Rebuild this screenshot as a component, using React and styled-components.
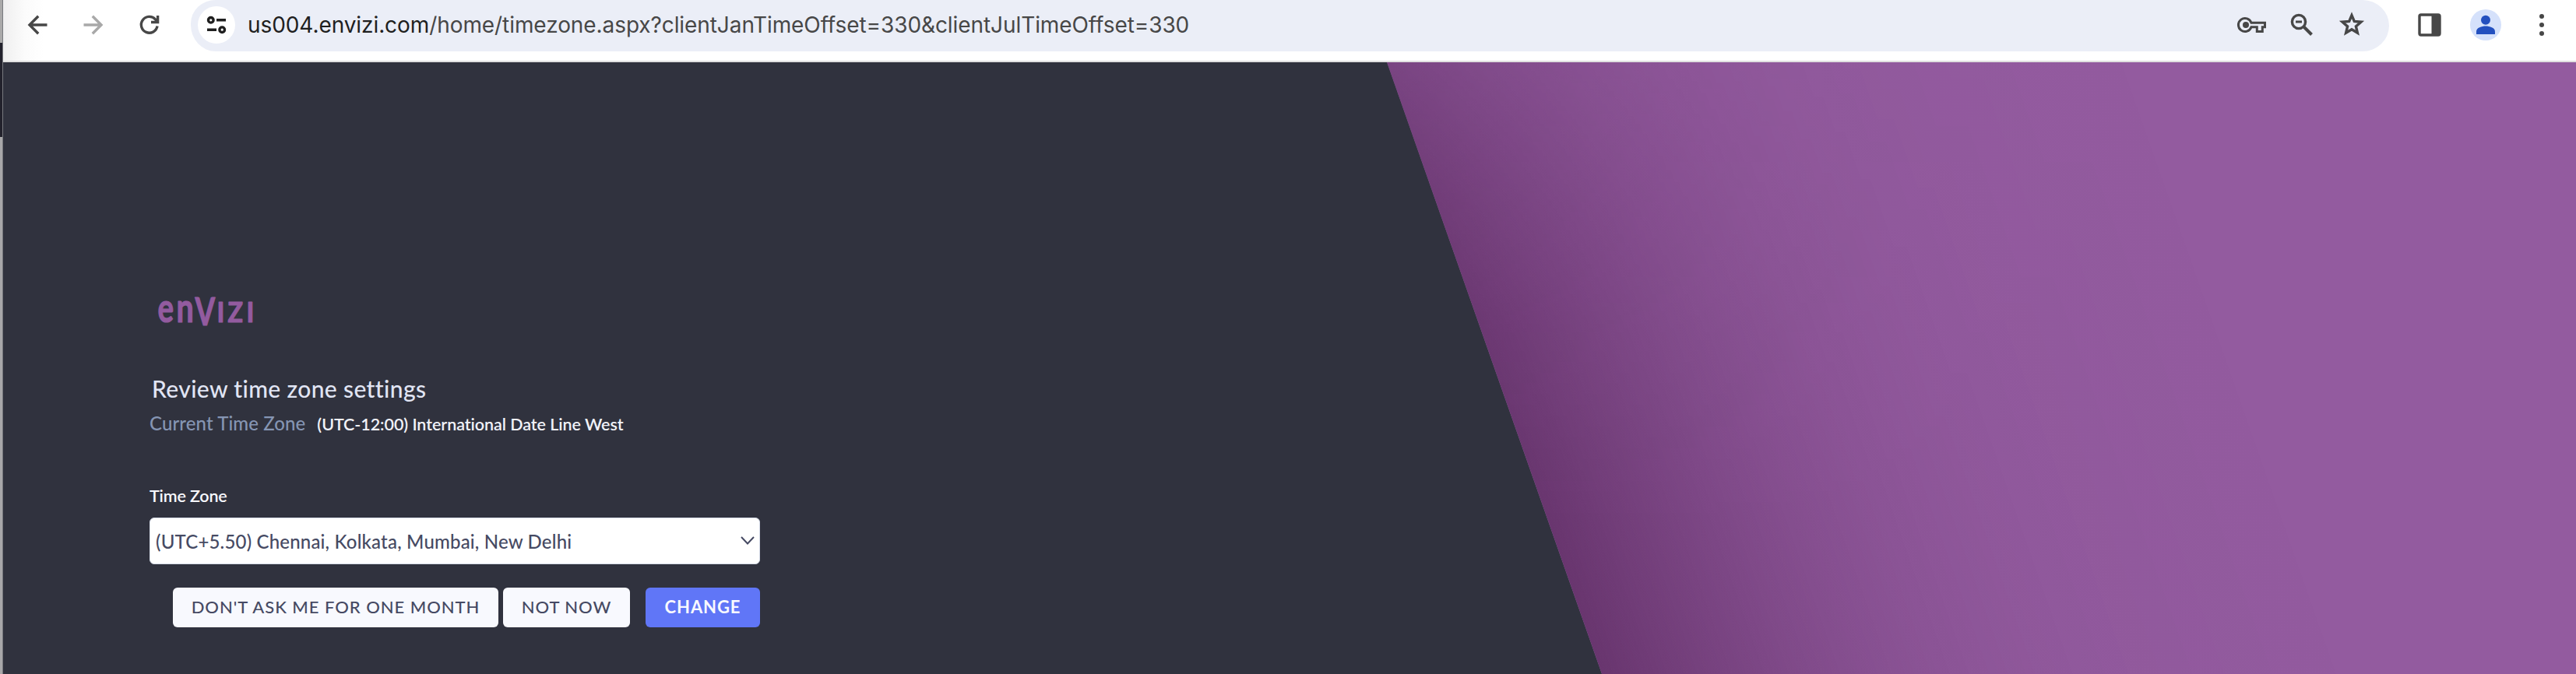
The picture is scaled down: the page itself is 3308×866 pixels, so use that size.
import React from "react";
import styled, { createGlobalStyle } from "styled-components";

const GlobalStyle = createGlobalStyle`
  *, *::before, *::after { box-sizing: border-box; }
  html, body { margin: 0; padding: 0; overflow: hidden; }
`;

const Screen = styled.div`
  display: flex;
  width: 3308px;
  height: 866px;
  overflow: hidden;
  font-family: Lato, "Open Sans", sans-serif;
`;

/* Sliver of the window that sits behind the browser. */
const BackWindow = styled.div`
  flex: 0 0 4px;
  border-right: 1px solid #77797e;
  background: linear-gradient(#a9a9a9 0 55px, #22222c 55px 176px, #a8a8aa 176px);
`;

const Browser = styled.div`
  flex: 1;
  min-width: 0;
  display: flex;
  flex-direction: column;
`;

const Toolbar = styled.header`
  flex: 0 0 80px;
  display: flex;
  align-items: flex-start;
  padding-left: 28px;
  border-bottom: 2px solid #e0e0e0;
  background: linear-gradient(90deg, #efefef, #fbfbfb 28px, #ffffff 52px);
`;

const NavButtons = styled.nav`
  display: flex;
  gap: 40px;
  height: 64px;
  align-items: center;
  width: 213px;
`;

const Icon = styled.svg`
  display: block;
  flex: none;
  width: ${(p) => p.$size || 32}px;
  height: ${(p) => p.$size || 32}px;
  color: ${(p) => p.$color || "#474747"};
  fill: none;
  stroke: currentColor;
  stroke-width: 3.4;
`;

const AddressBar = styled.div`
  width: 2823px;
  height: 66px;
  display: flex;
  align-items: center;
  padding: 0 28px 2px 9px;
  border-radius: 32px 34px 34px 32px / 30px 33px 33px 34px;
  background: #ebeef7;
`;

const SiteInfo = styled.div`
  width: 48px;
  height: 48px;
  display: grid;
  place-items: center;
  border-radius: 50%;
  background: #fff;
`;

const Url = styled.div`
  flex: 1;
  margin-left: 16px;
  font: 400 28px/40px Inter, Roboto, sans-serif;
  letter-spacing: -0.08px;
  white-space: nowrap;
  color: #474747;
`;

const Host = styled.span`
  color: #1f1f1f;
`;

const AddressActions = styled.div`
  display: flex;
  align-items: center;
  gap: 24px;
`;

const BrowserActions = styled.div`
  height: 64px;
  display: flex;
  align-items: center;
  gap: 32px;
  margin-left: 32px;
`;

const Avatar = styled.div`
  width: 40px;
  height: 40px;
  display: grid;
  place-items: center;
  border-radius: 50%;
  background: #d5e1fb;
`;

const Page = styled.main`
  flex: 1;
  position: relative;
  overflow: hidden;
  background: #935b9f;

  /* Slanted dark panel and the soft shade it throws on the purple backdrop. */
  &::before,
  &::after {
    content: "";
    position: absolute;
    top: 0;
    height: 100%;
    transform: skewX(19.35deg);
    transform-origin: 0 0;
  }

  &::before {
    left: -423px;
    width: 2200px;
    background: #30323e;
  }

  &::after {
    left: 1776.5px;
    width: 1000px;
    background: linear-gradient(
      90deg,
      rgba(63, 17, 63, 0.5),
      rgba(63, 17, 63, 0.401) 82px,
      rgba(63, 17, 63, 0.309) 164px,
      rgba(63, 17, 63, 0.227) 246px,
      rgba(63, 17, 63, 0.159) 328px,
      rgba(63, 17, 63, 0.106) 410px,
      rgba(63, 17, 63, 0.067) 492px,
      rgba(63, 17, 63, 0.04) 574px,
      rgba(63, 17, 63, 0.023) 656px,
      rgba(63, 17, 63, 0.006) 820px,
      rgba(63, 17, 63, 0) 984px
    );
    mask-image: linear-gradient(
      rgba(0, 0, 0, 0.6),
      rgba(0, 0, 0, 0.72) 100px,
      rgba(0, 0, 0, 0.81) 185px,
      rgba(0, 0, 0, 0.93) 350px,
      #000 600px
    );
  }
`;

const Settings = styled.section`
  position: relative;
  z-index: 1;
  width: 784px;
  margin-left: 188px;
  padding-top: 298px;
  display: flex;
  flex-direction: column;
`;

const Logo = styled.svg`
  display: block;
  overflow: visible;
  width: 130px;
  height: 46px;
  margin-left: 8px;
  fill: #935b9f;
  stroke: #935b9f;
  stroke-width: 1.2;
  stroke-linejoin: round;
  font-family: Lato, sans-serif;
`;

const Title = styled.h1`
  margin: 55px 0 0 3px;
  font-size: 30px;
  font-weight: 500;
  line-height: 40px;
  letter-spacing: 0.37px;
  white-space: nowrap;
  color: #e1e5f4;
`;

const Current = styled.div`
  display: flex;
  align-items: baseline;
  gap: 15px;
  margin-top: 9px;
  line-height: 32px;
  white-space: nowrap;
`;

const CurrentLabel = styled.span`
  font-size: 24px;
  font-weight: 500;
  letter-spacing: 0.1px;
  color: #8595b3;
`;

const CurrentValue = styled.span`
  font-size: 21.5px;
  font-weight: 600;
  letter-spacing: -0.06px;
  color: #f1f2f9;
`;

const FieldLabel = styled.label`
  margin-top: 60px;
  font-size: 21.5px;
  font-weight: 600;
  line-height: 32px;
  letter-spacing: -0.15px;
  color: #f8f9fe;
`;

const Select = styled.div`
  height: 60px;
  margin-top: 12px;
  padding: 0 7px;
  display: flex;
  align-items: center;
  justify-content: space-between;
  border: 1px solid #d6dce8;
  border-radius: 6px;
  background: #fff;
  font-size: 24px;
  font-weight: 500;
  letter-spacing: 0.18px;
  color: #464a63;
`;

const Chevron = styled.svg`
  width: 18px;
  height: 11px;
  margin: 0 -1px 1px 0;
  fill: none;
  stroke: #464a63;
  stroke-width: 2;
`;

const Actions = styled.div`
  display: flex;
  margin: 30px 0 0 30px;
`;

const Button = styled.button`
  width: ${(p) => p.$width}px;
  height: 51px;
  margin: 0 ${(p) => p.$after || 0}px 0 0;
  padding: 0 0 1px;
  border: 0;
  border-radius: 6px;
  background: ${(p) => (p.$primary ? "#6076f7" : "#f8f9fe")};
  color: ${(p) => (p.$primary ? "#f8f9fe" : "#464a63")};
  font: ${(p) => (p.$primary ? 700 : 500)} 22px/32px Lato, sans-serif;
  letter-spacing: ${(p) => (p.$primary ? 0.9 : 0.95)}px;
  white-space: nowrap;
`;

const LETTERS = [
  { ch: "e", x: 12.8, y: 35.5, size: 52, sx: 0.74, weight: 700 },
  { ch: "n", x: 37.6, y: 35.5, size: 52, sx: 0.76, weight: 700 },
  { ch: "V", x: 63.4, y: 40, size: 50, sx: 0.74, weight: 700 },
  { ch: "I", x: 83.5, y: 35.5, size: 37, sx: 0.9, weight: 700 },
  { ch: "Z", x: 102.3, y: 35.5, size: 37, sx: 0.87, weight: 700 },
  { ch: "I", x: 121.5, y: 35.5, size: 37, sx: 0.9, weight: 700 },
];

export default function App() {
  return (
    <>
      <GlobalStyle />
      <Screen>
        <BackWindow />
        <Browser>
          <Toolbar>
            <NavButtons>
              <Icon viewBox="0 0 32 32">
                <path d="M28.5 16H6M17.2 4.8 6 16l11.2 11.2" />
              </Icon>
              <Icon viewBox="0 0 32 32" $color="#a9a9a9">
                <path d="M3.5 16H26M14.8 4.8 26 16 14.8 27.2" />
              </Icon>
              <Icon viewBox="0 0 32 32">
                <path d="M26 17.5A10.400 10.400 0 1 1 23.600 9L26.500 12" />
                <path d="M26.600 4V12.500H18" />
              </Icon>
            </NavButtons>
            <AddressBar>
              <SiteInfo>
                <Icon viewBox="0 0 32 32" $color="#1f1f1f">
                  <circle cx="8.8" cy="9.8" r="3.3" />
                  <path d="M16 9.8H28M4 22.2H16" />
                  <circle cx="23.2" cy="22.2" r="3.3" />
                </Icon>
              </SiteInfo>
              <Url>
                <Host>us004.envizi.com</Host>
                /home/timezone.aspx?clientJanTimeOffset=330&amp;clientJulTimeOffset=330
              </Url>
              <AddressActions>
                <Icon viewBox="0 0 40 40" $size={40}>
                  <path
                    strokeWidth="3"
                    d="M19 17.3H36.500V22.7H33.300V28.500H26.300V22.7H19A8.500 8.500 0 1 1 19 17.3Z"
                  />
                  <circle cx="12" cy="20" r="4" fill="currentColor" stroke="none" />
                </Icon>
                <Icon viewBox="0 0 40 40" $size={40}>
                  <circle cx="16" cy="16" r="8.6" />
                  <path strokeWidth="3" d="M12 16H20" />
                  <path strokeWidth="4" d="M22.5 22.5 32.5 32.5" />
                </Icon>
                <Icon viewBox="0 0 40 40" $size={40}>
                  <path d="M20 7.600 23.300 15.400 32 16.200 25.400 21.900 27.400 30.300 20 25.800 12.600 30.300 14.600 21.900 8 16.200 16.700 15.400Z" />
                </Icon>
              </AddressActions>
            </AddressBar>
            <BrowserActions>
              <Icon viewBox="0 0 40 40" $size={40}>
                <rect x="7" y="7" width="26" height="26" rx="2" />
                <path fill="currentColor" stroke="none" d="M22.5 6H33V34H22.5Z" />
              </Icon>
              <Avatar>
                <Icon viewBox="0 0 40 40" $size={40} $color="#2350bf">
                  <g fill="currentColor" stroke="none">
                    <circle cx="20" cy="13.8" r="6" />
                    <path d="M8 32V28.5C8 23.5 15 21.5 20 21.5S32 23.5 32 28.5V32Z" />
                  </g>
                </Icon>
              </Avatar>
              <Icon viewBox="0 0 40 40" $size={40}>
                <g fill="currentColor" stroke="none">
                  <circle cx="20" cy="9" r="3" />
                  <circle cx="20" cy="20" r="3" />
                  <circle cx="20" cy="31" r="3" />
                </g>
              </Icon>
            </BrowserActions>
          </Toolbar>
          <Page>
            <Settings>
              <Logo viewBox="0 0 130 46" role="img" aria-label="enVIZI">
                {LETTERS.map((l, i) => (
                  <text
                    key={i}
                    transform={`translate(${l.x} ${l.y}) scale(${l.sx} 1)`}
                    fontSize={l.size}
                    fontWeight={l.weight}
                    textAnchor="middle"
                  >
                    {l.ch}
                  </text>
                ))}
              </Logo>
              <Title>Review time zone settings</Title>
              <Current>
                <CurrentLabel>Current Time Zone</CurrentLabel>
                <CurrentValue>(UTC-12:00) International Date Line West</CurrentValue>
              </Current>
              <FieldLabel>Time Zone</FieldLabel>
              <Select>
                (UTC+5.50) Chennai, Kolkata, Mumbai, New Delhi
                <Chevron viewBox="0 0 18 11">
                  <path d="M1 1 9 9.5 17 1" />
                </Chevron>
              </Select>
              <Actions>
                <Button $width={418} $after={6}>DON'T ASK ME FOR ONE MONTH</Button>
                <Button $width={163} $after={20}>NOT NOW</Button>
                <Button $width={147} $primary>CHANGE</Button>
              </Actions>
            </Settings>
          </Page>
        </Browser>
      </Screen>
    </>
  );
}
